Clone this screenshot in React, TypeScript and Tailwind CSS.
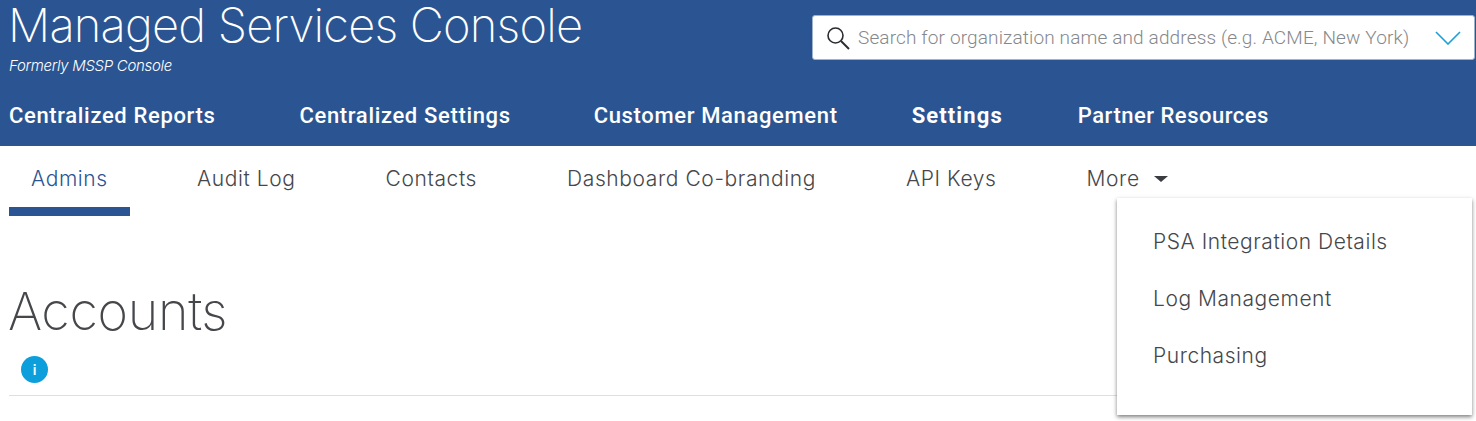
import React from 'react';

const navItems = [
  { label: 'Centralized Reports', className: 'font-medium' },
  { label: 'Centralized Settings', className: 'font-medium ml-[84px]' },
  { label: 'Customer Management', className: 'font-medium ml-[83px]' },
  { label: 'Settings', className: 'font-bold tracking-[1.1px] ml-[74px]' },
  { label: 'Partner Resources', className: 'font-medium tracking-[0.5px] ml-[75px]' },
];

const tabs = ['Admins', 'Audit Log', 'Contacts', 'Dashboard Co-branding', 'API Keys'];
const moreItems = ['PSA Integration Details', 'Log Management', 'Purchasing'];

export default function App() {
  return (
    <div className="relative h-[421px] w-[1476px] overflow-hidden bg-white font-['Inter',sans-serif] text-[#45474b]">
      {/* Header */}
      <header className="h-[146px] bg-[#2b5592] text-white">
        <div className="flex h-[84px] justify-between">
          <div className="pl-[8px]">
            <h1 className="text-[47px] font-extralight leading-[50px] tracking-[-0.8px]">Managed Services Console</h1>
            <p className="ml-px mt-[7px] text-[15px] font-light italic leading-[18px] tracking-[-0.3px]">Formerly MSSP Console</p>
          </div>
          <div className="mt-[15px] mr-px flex h-[45px] w-[663px] items-center rounded-[3px] border border-[#9fb2cc] bg-white pl-[13px] pr-[13px]">
            <svg viewBox="0 0 24 24" className="h-[24px] w-[24px] shrink-0" fill="none" stroke="#2a2c30" strokeWidth="1.6">
              <circle cx="9.5" cy="9.5" r="7.5" />
              <path d="M15 15l8 8" strokeWidth="2" />
            </svg>
            <span className="ml-[8px] flex-1 whitespace-nowrap pt-[2px] font-['Roboto',sans-serif] text-[19px] font-light tracking-[0.14px] text-[#85888c]">
              Search for organization name and address (e.g. ACME, New York)
            </span>
            <svg viewBox="0 0 26 14" className="h-[14px] w-[26px] shrink-0" fill="none" stroke="#1ba0d7" strokeWidth="1.6">
              <path d="M1 1l12 12L25 1" />
            </svg>
          </div>
        </div>
        <nav className="flex items-center pl-[9px] pt-[18px] font-['Roboto',sans-serif] text-[22px] leading-[28px] tracking-[0.65px]">
          {navItems.map((item) => (
            <a key={item.label} className={item.className}>{item.label}</a>
          ))}
        </nav>
      </header>

      {/* Tabs */}
      <div className="flex h-[70px] pl-[9px] text-[21px] font-light tracking-[0.6px]">
        {tabs.map((tab, i) => (
          <div
            key={tab}
            className={
              i === 0
                ? 'mr-[45px] h-[70px] w-[121px] border-b-[9px] border-[#2b5592] pl-[22px] pt-[19px] leading-[28px] text-[#2b5592]'
                : 'mr-[46px] h-[70px] px-[22px] pt-[19px] leading-[28px]'
            }
          >
            {tab}
          </div>
        ))}
        <div className="flex h-[70px] items-start px-[22px] pt-[19px] leading-[28px]">
          More
          <span className="ml-[14px] mt-[11px] h-0 w-0 border-x-[7px] border-t-[6px] border-x-transparent border-t-[#3a3c40]" />
        </div>
      </div>

      {/* Page title */}
      <div className="mx-[9px] h-[180px] border-b border-[#dfdfdf]">
        <h2 className="-ml-px pt-[66px] text-[52px] font-extralight leading-[60px] tracking-[-0.3px]">Accounts</h2>
        <div className="ml-[12px] mt-[14px] flex h-[27px] w-[27px] items-center justify-center rounded-full bg-[#0d9fdb]">
          <span className="text-[14px] font-semibold leading-none text-white">i</span>
        </div>
      </div>

      {/* More dropdown */}
      <div className="absolute left-[1117px] top-[198px] h-[217px] w-[355px] bg-white pl-[36px] pt-[15px] text-[21px] font-light tracking-[0.55px] shadow-[0_2px_4px_rgba(0,0,0,0.5)]">
        {moreItems.map((item) => (
          <div key={item} className="h-[57px] leading-[57px]">{item}</div>
        ))}
      </div>
    </div>
  );
}
